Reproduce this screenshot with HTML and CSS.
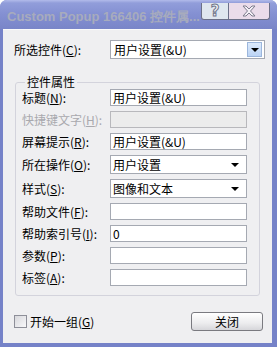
FILE: index.html
```html
<!DOCTYPE html>
<html>
  <head>
    <title>Custom Popup 166406 控件属性</title>
    <link rel="stylesheet" href="styles.css">
  </head>
  <body>
    <div class="window">
      <div class="titlebar">
        <span class="title">Custom Popup 166406 控件属...</span>
        <div class="caption-buttons">
          <span class="cap-btn help">?</span>
          <span class="cap-btn close">
            <svg width="16" height="12" viewBox="0 0 16 12">
              <path d="M2 1h3l3 3 3-3h3l-4.5 5 4.5 5h-3l-3-3-3 3h-3l4.5-5z" fill="#f4f0f6" stroke="#7c7c8c" stroke-width="1"/>
            </svg>
          </span>
        </div>
      </div>

      <div class="client">
        <div class="top-row">
          <span class="label">所选控件(<u>C</u>):</span>
          <div class="combo main">
            <span class="combo-text">用户设置(&amp;U)</span>
            <span class="drop-btn"><span class="arrow"></span></span>
          </div>
        </div>

        <fieldset class="group">
          <legend>控件属性</legend>
          <div class="row">
            <span class="label">标题(<u>N</u>):</span>
            <span class="field">用户设置(&amp;U)</span>
          </div>
          <div class="row">
            <span class="label disabled">快捷键文字(<u>H</u>):</span>
            <span class="field disabled"></span>
          </div>
          <div class="row">
            <span class="label">屏幕提示(<u>R</u>):</span>
            <span class="field">用户设置(&amp;U)</span>
          </div>
          <div class="row tall">
            <span class="label">所在操作(<u>O</u>):</span>
            <span class="field flat-combo">用户设置<span class="arrow"></span></span>
          </div>
          <div class="row tall">
            <span class="label">样式(<u>S</u>):</span>
            <span class="field flat-combo">图像和文本<span class="arrow"></span></span>
          </div>
          <div class="row">
            <span class="label">帮助文件(<u>F</u>):</span>
            <span class="field"></span>
          </div>
          <div class="row">
            <span class="label">帮助索引号(<u>I</u>):</span>
            <span class="field">0</span>
          </div>
          <div class="row">
            <span class="label">参数(<u>P</u>):</span>
            <span class="field"></span>
          </div>
          <div class="row">
            <span class="label">标签(<u>A</u>):</span>
            <span class="field"></span>
          </div>
        </fieldset>

        <div class="bottom-row">
          <label class="check"><span class="box"></span><span>开始一组(<u>G</u>)</span></label>
          <span class="button">关闭</span>
        </div>
      </div>
    </div>
  </body>
</html>
```

FILE: styles.css
```css
body {
    margin: 0;
    font-family: "Noto Sans CJK SC", "DejaVu Sans", sans-serif;
    font-size: 12px;
    color: #000;
}
u {
    text-decoration: underline;
    text-underline-offset: 1px;
}
.window {
    width: 277px;
    height: 347px;
    background: #7582c8;
    border-radius: 7px 7px 0 0;
    display: flex;
    flex-direction: column;
    overflow: hidden;
}
.titlebar {
    height: 29px;
    flex: none;
    background: linear-gradient(#b2bbea 0, #919dda 3px, #8490d2 14px, #7985c8 29px);
    display: flex;
    align-items: flex-start;
    justify-content: space-between;
    padding: 0 7px 0 7px;
    box-sizing: border-box;
}
.title {
    font-family: "Liberation Sans", sans-serif;
    font-weight: bold;
    font-size: 13px;
    color: #a7abbd;
    margin-top: 8px;
    white-space: nowrap;
}
.caption-buttons {
    display: flex;
    margin-top: 3px;
}
.cap-btn {
    height: 16px;
    border: 1px solid #6b7088;
    border-top: none;
    display: flex;
    align-items: center;
    justify-content: center;
}
.help {
    width: 26px;
    background: #dfe7ef;
    border-radius: 0 0 0 3px;
    font-family: "DejaVu Sans", sans-serif;
    font-weight: bold;
    font-size: 15px;
    color: #f2f4f8;
    -webkit-text-stroke: 1px #70768a;
}
.close {
    width: 40px;
    background: #eadcea;
    border-left: none;
    border-radius: 0 0 3px 0;
}
.client {
    flex: 1;
    margin: 0 5px 4px 3px;
    background: #efeff1;
    border-top: 1px solid #fafafa;
    display: flex;
    flex-direction: column;
    padding: 0 0 0 11px;
}
.top-row {
    display: flex;
    align-items: center;
    margin-top: 10px;
}
.top-row .label {
    width: 96px;
}
.combo {
    width: 155px;
    height: 19px;
    box-sizing: border-box;
    border: 1px solid #a5a9b2;
    background: #fff;
    display: flex;
    align-items: center;
    justify-content: space-between;
    padding: 0 2px 0 3px;
}
.drop-btn {
    width: 15px;
    height: 15px;
    box-sizing: border-box;
    border: 1px solid #9cb6dc;
    background: linear-gradient(#dceafb, #bcd4f5);
    display: flex;
    align-items: center;
    justify-content: center;
}
.arrow {
    width: 0;
    height: 0;
    border-left: 4px solid transparent;
    border-right: 4px solid transparent;
    border-top: 4px solid #000;
}
.group {
    margin: 16px 0 0 1px;
    width: 245px;
    height: 221px;
    box-sizing: border-box;
    border: 1px solid #d3d3dc;
    border-radius: 3px;
    padding: 0 0 0 6px;
    display: flex;
    flex-direction: column;
    gap: 5px;
}
.group legend {
    padding: 0 2px;
    margin-left: 3px;
    line-height: 14px;
}
.row {
    display: flex;
    align-items: center;
    height: 17px;
}
.row.tall {
    height: 19px;
}
.row .label {
    width: 88px;
    white-space: nowrap;
}
.label.disabled {
    color: #a9a9ae;
}
.field {
    width: 137px;
    height: 100%;
    box-sizing: border-box;
    border: 1px solid #a5a9b2;
    background: #fff;
    padding: 0 2px;
    display: flex;
    align-items: center;
    line-height: 14px;
}
.field.disabled {
    background: #ececec;
    border-color: #b8b8bc;
}
.flat-combo {
    justify-content: space-between;
    padding-right: 7px;
}
.bottom-row {
    display: flex;
    align-items: center;
    justify-content: space-between;
    margin-top: 15px;
    padding-right: 9px;
}
.check {
    display: flex;
    align-items: center;
    gap: 3px;
}
.box {
    width: 13px;
    height: 13px;
    box-sizing: border-box;
    border: 1px solid #8e8f99;
    background: linear-gradient(135deg, #d8d8dc, #f8f8fa);
}
.button {
    width: 72px;
    height: 19px;
    box-sizing: border-box;
    border: 1px solid #7a7a80;
    border-radius: 3px;
    background: linear-gradient(#ffffff, #ececee 60%, #d6d6da);
    display: flex;
    align-items: center;
    justify-content: center;
    margin-top: 1px;
}
```
